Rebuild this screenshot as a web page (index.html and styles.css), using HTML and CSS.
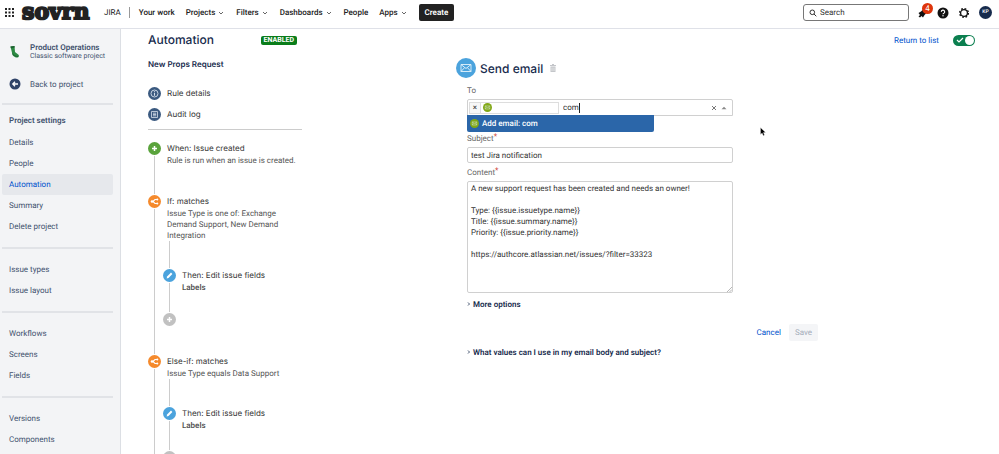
FILE: index.html
```html
<!DOCTYPE html>
<html lang="en">
<head>
  <meta charset="UTF-8" />
  <meta name="viewport" content="width=device-width, initial-scale=1" />
  <title>Automation - Jira</title>
  <link rel="stylesheet" href="styles.css">
</head>
<body>
  <!-- shared icon shapes -->
  <svg class="sprite" aria-hidden="true">
    <symbol id="chevron" viewBox="0 0 8 8"><path d="M2 3l2 2 2-2" fill="none" stroke="#555" stroke-width=".9" /></symbol>
    <symbol id="plus" viewBox="0 0 13 13"><path d="M6.5 4v5M4 6.500h5" stroke="#fff" stroke-width="1.500" /></symbol>
    <symbol id="pencil" viewBox="0 0 13 13"><path d="M3.600 9.400l.5-1.900 3.900-3.900 1.400 1.400-3.900 3.900z" fill="#fff" /></symbol>
    <symbol id="branch" viewBox="0 0 13 13">
      <path d="M4 6.500h1l2-2h2M5 6.500l2 2h2" fill="none" stroke="#fff" stroke-width="1.100" />
      <circle cx="4" cy="6.500" r="1.300" fill="#fff" /><circle cx="9.300" cy="4.500" r="1" fill="#fff" /><circle cx="9.300" cy="8.500" r="1" fill="#fff" />
    </symbol>
    <symbol id="mail" viewBox="0 0 20 20">
      <path d="M5 6.500h10v7H5zM5 6.500l5 4 5-4M5 13.500l3.700-4M15 13.500l-3.700-4" fill="none" stroke="#e4f3fc" stroke-width=".9" stroke-linejoin="round" />
    </symbol>
  </svg>

  <div class="app">
    <header class="topbar">
      <button class="icon-btn" aria-label="Switch apps">
        <svg width="9" height="9" viewBox="0 0 9 9"><path d="M0 0h2v2H0zM3.500 0h2v2h-2zM7 0h2v2H7zM0 3.500h2v2H0zM3.500 3.500h2v2h-2zM7 3.500h2v2H7zM0 7h2v2H0zM3.500 7h2v2h-2zM7 7h2v2H7z" fill="#222" /></svg>
      </button>
      <a class="logo" href="#">sovrn</a>
      <span class="product">JIRA</span>
      <nav class="main-nav">
        <a href="#">Your work</a>
        <a href="#">Projects <svg width="8" height="8"><use href="#chevron" /></svg></a>
        <a href="#">Filters <svg width="8" height="8"><use href="#chevron" /></svg></a>
        <a href="#">Dashboards <svg width="8" height="8"><use href="#chevron" /></svg></a>
        <a href="#">People</a>
        <a href="#">Apps <svg width="8" height="8"><use href="#chevron" /></svg></a>
      </nav>
      <button class="create">Create</button>
      <div class="tools">
        <label class="search">
          <svg width="8" height="8" viewBox="0 0 8 8"><circle cx="3.300" cy="3.300" r="2.300" fill="none" stroke="#333" /><path d="M5 5l2.300 2.300" stroke="#333" /></svg>
          <input type="text" placeholder="Search" aria-label="Search" />
        </label>
        <button class="icon-btn bell" aria-label="Notifications">
          <svg width="10" height="10" viewBox="0 0 10 10"><path d="M.5 5L3 3.500l2.500-2.500 3.500 3.500L6.500 7 5 9.500 3.500 8 2 9.500.5 8.500 2 7z" fill="#111" /></svg>
          <span class="badge">4</span>
        </button>
        <button class="icon-btn" aria-label="Help">
          <svg width="12" height="12" viewBox="0 0 12 12"><circle cx="6" cy="6" r="5.500" fill="#111" /><path d="M4.300 4.900a1.700 1.700 0 1 1 2.500 1.400c-.6.300-.8.500-.8 1" fill="none" stroke="#fff" stroke-width="1.100" /><circle cx="6" cy="8.700" r=".7" fill="#fff" /></svg>
        </button>
        <button class="icon-btn" aria-label="Settings">
          <svg width="12" height="12" viewBox="0 0 12 12"><circle cx="6" cy="6" r="3.400" fill="none" stroke="#111" stroke-width="1.300" /><circle cx="6" cy="6" r="4.400" fill="none" stroke="#111" stroke-width="1.300" stroke-dasharray="1.728 1.728" /></svg>
        </button>
        <button class="avatar" aria-label="Profile">KP</button>
      </div>
    </header>

    <div class="body">
      <aside class="sidebar">
        <div class="project">
          <svg width="12" height="14" viewBox="0 0 12 14"><path d="M1.500 1.500l4-.5.500 6 3.500 2.800c1 1 .3 2.700-1.200 2.700-1.800 0-4-1.200-4.800-2.600z" fill="#2c8a43" /><path d="M1.500 1.500l4-.5.1 1.600-3.800.6z" fill="#1b5e2f" /><path d="M3.500 8.500c.7 2 3.500 3 5.500 3" fill="none" stroke="#1d6632" /></svg>
          <div>
            <strong>Product Operations</strong>
            <span>Classic software project</span>
          </div>
        </div>
        <a class="back" href="#">
          <svg width="12" height="12" viewBox="0 0 12 12"><circle cx="6" cy="6" r="5.500" fill="#2f4368" /><path d="M9 6H3.800M6 3.800L3.800 6 6 8.200" fill="none" stroke="#fff" stroke-width="1.300" /></svg>
          Back to project
        </a>
        <hr />
        <h2>Project settings</h2>
        <nav class="side-nav">
          <a href="#">Details</a>
          <a href="#">People</a>
          <a class="active" href="#">Automation</a>
          <a href="#">Summary</a>
          <a href="#">Delete project</a>
          <hr />
          <a href="#">Issue types</a>
          <a href="#">Issue layout</a>
          <hr />
          <a href="#">Workflows</a>
          <a href="#">Screens</a>
          <a href="#">Fields</a>
          <hr />
          <a href="#">Versions</a>
          <a href="#">Components</a>
        </nav>
      </aside>

      <main class="content">
        <section class="rule">
          <div class="rule-head">
            <h1>Automation</h1>
            <span class="lozenge">ENABLED</span>
          </div>
          <h2>New Props Request</h2>
          <div class="rule-links">
            <a href="#">
              <svg class="dot navy" viewBox="0 0 13 13"><circle cx="6.500" cy="6.500" r="3.500" fill="none" stroke="#d5dfeb" stroke-width=".9" /><path d="M6.500 4.300v1M6.500 6v2.700" stroke="#d5dfeb" stroke-width="1.100" /></svg>
              Rule details
            </a>
            <a href="#">
              <svg class="dot navy" viewBox="0 0 13 13"><path d="M3.500 3.500h6v6h-6zM5 5.200h3.200M5 6.500h3.200M5 7.800h3.200" fill="none" stroke="#d5dfeb" stroke-width=".8" /></svg>
              Audit log
            </a>
          </div>
          <ol class="steps">
            <li class="trigger">
              <svg class="dot green"><use href="#plus" /></svg>
              <div>
                <h3>When: Issue created</h3>
                <p>Rule is run when an issue is created.</p>
              </div>
            </li>
            <li>
              <svg class="dot orange"><use href="#branch" /></svg>
              <div>
                <h3>If: matches</h3>
                <p>Issue Type is one of: Exchange Demand Support, New Demand Integration</p>
                <ol class="substeps">
                  <li>
                    <svg class="dot blue"><use href="#pencil" /></svg>
                    <div>
                      <h3>Then: Edit issue fields</h3>
                      <p><b>Labels</b></p>
                    </div>
                  </li>
                  <li><button class="dot grey" aria-label="Add component"><svg width="13" height="13"><use href="#plus" /></svg></button></li>
                </ol>
              </div>
            </li>
            <li>
              <svg class="dot orange"><use href="#branch" /></svg>
              <div>
                <h3>Else-if: matches</h3>
                <p>Issue Type equals Data Support</p>
                <ol class="substeps">
                  <li>
                    <svg class="dot blue"><use href="#pencil" /></svg>
                    <div>
                      <h3>Then: Edit issue fields</h3>
                      <p><b>Labels</b></p>
                    </div>
                  </li>
                  <li><button class="dot grey" aria-label="Add component"><svg width="13" height="13"><use href="#plus" /></svg></button></li>
                </ol>
              </div>
            </li>
          </ol>
        </section>

        <section class="detail">
          <div class="detail-top">
            <a href="#">Return to list</a>
            <label class="toggle">
              <input type="checkbox" checked aria-label="Rule enabled" />
              <svg width="8" height="8" viewBox="0 0 8 8"><path d="M1 4l2 2 4-4" fill="none" stroke="#fff" stroke-width="1.200" /></svg>
              <span class="knob"></span>
            </label>
          </div>
          <form class="email">
            <div class="email-head">
              <svg class="mail-icon" viewBox="0 0 20 20"><use href="#mail" /></svg>
              <h2>Send email</h2>
              <button type="button" class="icon-btn" aria-label="Delete">
                <svg width="6" height="8" viewBox="0 0 6 8"><path d="M0 1h2V0h2v1h2v1H0zM.5 2.500h5V8h-5z" fill="#c4c6ca" /><path d="M2 3.500v3.500M4 3.500v3.500" stroke="#f3f3f3" stroke-width=".7" /></svg>
              </button>
            </div>
            <div class="fields">
              <label for="to">To</label>
              <div class="combo">
                <div class="chip">
                  <button type="button" aria-label="Remove">×</button>
                  <svg class="mini" viewBox="0 0 20 20"><use href="#mail" /></svg>
                </div>
                <input type="text" id="to" value="com" />
                <button type="button" class="clear" aria-label="Clear"><svg width="6" height="6" viewBox="0 0 6 6"><path d="M1 1l4 4M5 1L1 5" stroke="#777" /></svg></button>
                <button type="button" aria-label="Toggle options"><svg width="6" height="6" viewBox="0 0 6 6"><path d="M.5 4.200L3 1.700l2.500 2.500z" fill="#888" /></svg></button>
                <div class="options">
                  <svg class="mini" viewBox="0 0 20 20"><use href="#mail" /></svg>
                  Add email: com
                </div>
              </div>
              <label class="after-combo" for="subject">Subject<i>*</i></label>
              <input class="text" type="text" id="subject" value="test Jira notification" />
              <label for="content">Content<i>*</i></label>
              <div class="area">
                <textarea id="content">A new support request has been created and needs an owner!

Type: {{issue.issuetype.name}}
Title: {{issue.summary.name}}
Priority: {{issue.priority.name}}

https://authcore.atlassian.net/issues/?filter=33323</textarea>
                <svg class="grip" width="5" height="5" viewBox="0 0 5 5"><path d="M0 5l5-5M2.500 5L5 2.500" stroke="#999" stroke-width=".7" /></svg>
              </div>
            </div>
            <button type="button" class="expander"><svg width="4" height="5" viewBox="0 0 4 5"><path d="M1 .5l1.500 1.500L1 3.500" fill="none" stroke="#172b4d" stroke-width=".8" /></svg>More options</button>
            <div class="actions">
              <button type="button" class="cancel">Cancel</button>
              <button type="submit" class="save" disabled>Save</button>
            </div>
            <button type="button" class="expander"><svg width="4" height="5" viewBox="0 0 4 5"><path d="M1 .5l1.500 1.500L1 3.500" fill="none" stroke="#172b4d" stroke-width=".8" /></svg>What values can I use in my email body and subject?</button>
          </form>
        </section>
      </main>
    </div>

    <svg class="pointer" width="6" height="9" viewBox="0 0 6 9"><path d="M.5.500v7l1.600-1.500L3.300 8.700l1.200-.6-1.100-2.500h2.200z" fill="#000" stroke="#fff" stroke-width=".3" /></svg>
  </div>
</body>
</html>
```

FILE: styles.css
```css
* {
  box-sizing: border-box;
}

body {
  margin: 0;
  font-family: Roboto, "Liberation Sans", sans-serif;
  font-size: 8px;
  line-height: 11px;
  text-rendering: geometricPrecision;
  color: #333;
  background: #fff;
}

a {
  color: inherit;
  text-decoration: none;
}

button, input, textarea {
  font: inherit;
  color: inherit;
  text-rendering: inherit;
  padding: 0;
  border: 0;
  background: none;
}

h1, h2, h3, p, ol {
  margin: 0;
  padding: 0;
  font-weight: 400;
}

h1, h2, h3, .rule-links {
  font-family: Inter, "Liberation Sans", sans-serif;
}

li {
  list-style: none;
}

svg {
  display: block;
  flex-shrink: 0;
}

hr {
  height: 2px;
  margin: 10px 7px 10px 2px;
  border: 0;
  background: #e1e3e7;
}

.sprite {
  display: none;
}

.app {
  position: relative;
  display: flex;
  flex-direction: column;
  height: 100vh;
  overflow: hidden;
}

/* top bar */
.topbar {
  display: flex;
  align-items: center;
  flex-shrink: 0;
  height: 29px;
  padding: 0 7px 3px 5px;
  border-bottom: 1px solid #dfe1e8;
  color: #222;
}

.icon-btn {
  display: flex;
}

.logo {
  margin-left: 8px;
  width: 70px;
  font: 700 22px/25px "DejaVu Serif", serif;
  -webkit-text-stroke: 2px #222;
}

.product {
  margin-left: 12px;
  padding-right: 8px;
  border-right: 1px solid #999;
}

.main-nav {
  display: flex;
  gap: 11px;
  margin-left: 9px;
  font-weight: 500;
}

.main-nav a {
  display: flex;
  align-items: center;
  gap: 2px;
}

.create {
  height: 17px;
  margin-left: 11px;
  padding: 0 6px;
  border-radius: 2px;
  background: #222;
  color: #fff;
  font-weight: 600;
}

.tools {
  display: flex;
  align-items: center;
  gap: 9px;
  margin-left: auto;
}

.search {
  display: flex;
  align-items: center;
  gap: 3px;
  width: 106px;
  height: 17px;
  padding: 0 5px;
  border: 1px solid #777;
  border-radius: 3px;
}

.search input {
  width: 100%;
}

.search input::placeholder {
  color: #333;
}

.bell {
  position: relative;
}

.badge {
  position: absolute;
  top: -5px;
  right: -5px;
  width: 11px;
  height: 11px;
  border-radius: 6px;
  background: #de350b;
  color: #fff;
}

.avatar {
  width: 13px;
  height: 13px;
  border-radius: 50%;
  background: #172b4d;
  color: #fff;
  font-size: 5px;
  font-weight: 600;
}

.body {
  display: flex;
  flex: 1;
  min-height: 0;
}

/* sidebar */
.sidebar {
  flex: 0 0 121px;
  border-right: 1px solid #dcdfe4;
  background: #f3f4f6;
  color: #42526e;
}

.project {
  display: flex;
  align-items: center;
  gap: 9px;
  padding: 15px 0 0 9px;
}

.project strong, .project span {
  display: block;
  line-height: 8px;
}

.project strong {
  font-weight: 600;
}

.project span {
  font-size: 7px;
}

.back {
  display: flex;
  align-items: center;
  gap: 9px;
  padding: 18px 0 3px 9px;
}

.sidebar h2 {
  padding: 0 9px 6px;
  font-family: inherit;
  font-size: 8px;
  font-weight: 600;
}

.side-nav a {
  display: block;
  margin: 0 7px 0 2px;
  padding: 0 7px;
  line-height: 21px;
}

.side-nav .active {
  border-radius: 2px;
  background: #e6e8ec;
  color: #0052cc;
}

/* rule steps */
.content {
  display: flex;
  flex: 1;
  padding: 3px 24px 0 27px;
}

.rule {
  flex: 0 0 154px;
}

.rule-head {
  display: flex;
  align-items: center;
}

.rule-head h1 {
  color: #172b4d;
  font-size: 12px;
  font-weight: 500;
  line-height: 16px;
}

.lozenge {
  margin: 0 5px 0 auto;
  padding: 0 3px;
  border-radius: 2px;
  background: #0a7d1a;
  color: #fff;
  font-size: 7px;
  font-weight: 700;
  line-height: 9px;
}

.rule > h2 {
  margin-top: 11px;
  color: #172b4d;
  font-size: 8px;
  font-weight: 600;
}

.rule-links {
  display: grid;
  gap: 8px;
  padding: 17px 0 8px;
  border-bottom: 1px solid #ccc;
}

.rule-links a {
  display: flex;
  align-items: center;
  gap: 6px;
}

.dot {
  flex: 0 0 13px;
  width: 13px;
  height: 13px;
  border-radius: 50%;
  box-shadow: 0 0 0 1px #fff;
}

.navy { background: #3b5a80; }
.green { background: #5aa33c; }
.orange { background: #f58a2c; }
.blue { background: #4ba3dd; }
.grey { background: #c1c1c1; }

.steps, .substeps {
  background: linear-gradient(#ccc, #ccc) 6px 0 / 1px 100% no-repeat;
}

.steps {
  margin-top: 12px;
}

.steps li {
  display: flex;
  gap: 6px;
}

.steps h3 {
  font-size: 8px;
  line-height: 13px;
}

.steps p {
  max-width: 115px;
  color: #555;
}

.steps .trigger p {
  max-width: none;
}

.steps > li {
  padding-bottom: 29px;
}

.substeps {
  margin-left: -4px;
  padding-top: 28px;
}

.substeps li + li {
  padding-top: 20px;
}

.substeps b {
  font-weight: 600;
}

/* email form */
.detail {
  flex: 1;
  margin-left: 154px;
}

.detail-top {
  display: flex;
  align-items: center;
  justify-content: flex-end;
  gap: 14px;
  height: 16px;
  color: #0052cc;
}

.toggle {
  display: flex;
  align-items: center;
  justify-content: space-between;
  position: relative;
  width: 22px;
  height: 11px;
  padding: 0 1px 0 3px;
  border-radius: 6px;
  background: #0b7f4f;
}

.toggle input {
  position: absolute;
  inset: 0;
  margin: 0;
  opacity: 0;
}

.knob {
  width: 9px;
  height: 9px;
  border-radius: 50%;
  background: #fff;
}

.email {
  width: 362px;
  max-width: 100%;
}

.email-head {
  display: flex;
  align-items: center;
  margin-top: 10px;
}

.mail-icon {
  width: 20px;
  height: 20px;
  border-radius: 50%;
  background: #4ba3dd;
}

.email-head h2 {
  margin: 0 7px 0 4px;
  color: #172b4d;
  font-size: 12px;
  font-weight: 500;
}

.fields {
  width: 277px;
  padding: 3px 0 0 11px;
}

.fields label {
  display: block;
  margin: 5px 0 3px;
  line-height: 10px;
  color: #666;
}

.fields label i {
  color: #d04437;
  font-style: normal;
  vertical-align: 2px;
  line-height: 0;
}

.combo {
  display: flex;
  align-items: center;
  gap: 4px;
  position: relative;
  height: 17px;
  padding: 0 5px 0 1px;
  border: 1px solid #d0d0d0;
  border-radius: 2px 2px 0 0;
}

.chip {
  display: flex;
  align-items: center;
  width: 90px;
  height: 12px;
  border: 1px solid #ddd;
}

.chip button {
  width: 11px;
  height: 10px;
  margin-right: 2px;
  border-right: 1px solid #ddd;
  background: #f7f7f7;
  line-height: 9px;
}

.mini {
  width: 9px;
  height: 9px;
  border-radius: 50%;
  background: #82a816;
}

.combo input {
  width: 17px;
  border-right: 1px solid #222;
  line-height: 10px;
  outline: 0;
}

.combo .clear {
  margin-left: auto;
}

.options {
  display: flex;
  align-items: center;
  gap: 3px;
  position: absolute;
  top: 15px;
  left: -1px;
  width: 187px;
  height: 17px;
  padding-left: 3px;
  border-radius: 0 0 2px 2px;
  background: #2b66a9;
  color: #fff;
  font-weight: 500;
}

.fields .after-combo {
  margin-top: 18px;
}

.text, textarea {
  display: block;
  width: 100%;
  padding: 0 3px;
  border: 1px solid #d0d0d0;
  border-radius: 2px;
}

.text {
  height: 16px;
}

.area {
  position: relative;
}

textarea {
  height: 112px;
  padding-top: 1px;
  resize: none;
  overflow: hidden;
}

.grip {
  position: absolute;
  right: 1px;
  bottom: 1px;
}

.expander {
  display: flex;
  align-items: center;
  gap: 2px;
  margin: 6px 0 0 11px;
  color: #172b4d;
  font-weight: 600;
}

.actions {
  display: flex;
  justify-content: flex-end;
  gap: 8px;
  margin-top: 14px;
}

.cancel {
  color: #0052cc;
}

.save {
  height: 17px;
  padding: 0 6px;
  border-radius: 2px;
  background: #f4f5f7;
  color: #a5adba;
}

.pointer {
  position: absolute;
  top: 127px;
  left: 760px;
}
```
